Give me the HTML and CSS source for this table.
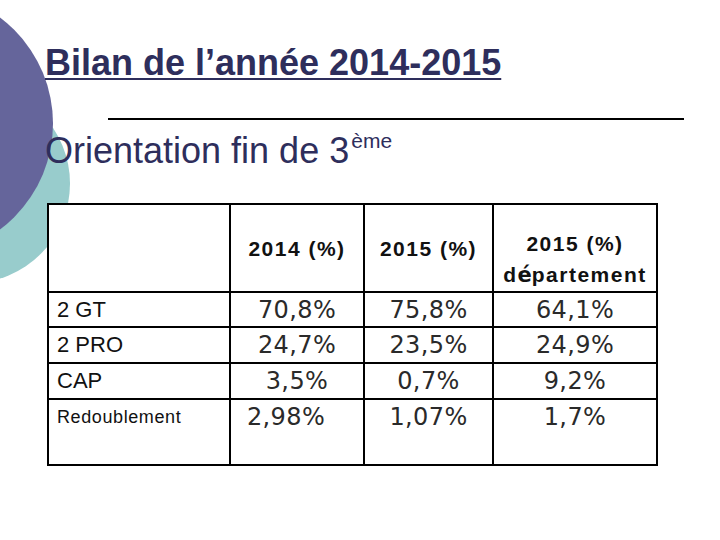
FILE: index.html
```html
<!DOCTYPE html>
<html lang="fr">
<head>
<meta charset="utf-8">
<link rel="stylesheet" href="styles.css">
</head>
<body>
<div class="slide">
  <div class="circle circle-teal"></div>
  <div class="circle circle-purple"></div>
  <h1 class="title">Bilan de l’année 2014-2015</h1>
  <div class="rule"></div>
  <h2 class="subtitle">Orientation fin de 3<sup>ème</sup></h2>
  <table class="grid">
    <colgroup>
      <col class="c1"><col class="c2"><col class="c3"><col class="c4">
    </colgroup>
    <tr class="head">
      <td></td>
      <td class="hd">2014 (%)</td>
      <td class="hd">2015 (%)</td>
      <td class="hd hd-bottom">2015 (%)<br>d<span class="eacc">é</span>partement</td>
    </tr>
    <tr class="r1">
      <td class="lab">2 GT</td><td class="val">70,8%</td><td class="val">75,8%</td><td class="val">64,1%</td>
    </tr>
    <tr class="r2">
      <td class="lab">2 PRO</td><td class="val">24,7%</td><td class="val">23,5%</td><td class="val">24,9%</td>
    </tr>
    <tr class="r3">
      <td class="lab">CAP</td><td class="val">3,5%</td><td class="val">0,7%</td><td class="val">9,2%</td>
    </tr>
    <tr class="r4">
      <td class="lab lab-small">Redoublement</td><td class="val val-off">2,98%</td><td class="val">1,07%</td><td class="val">1,7%</td>
    </tr>
  </table>
</div>
</body>
</html>
```

FILE: styles.css
```css
html, body {
  margin: 0;
  padding: 0;
  background: #ffffff;
}

.slide {
  position: relative;
  width: 720px;
  height: 540px;
  overflow: hidden;
  font-family: "Liberation Sans", Arial, sans-serif;
  display: flex;
  flex-direction: column;
}

.circle {
  position: absolute;
  border-radius: 50%;
}

.circle-purple {
  left: -212px;
  top: -9px;
  width: 265px;
  height: 265px;
  background: #65659b;
}

.circle-teal {
  left: -129px;
  top: 84px;
  width: 199px;
  height: 199px;
  background: #98cccc;
}

.title {
  position: relative;
  margin: 43px 0 0 45px;
  font-size: 36px;
  line-height: 40px;
  font-weight: bold;
  color: #2e2e5c;
  text-decoration: underline;
  text-decoration-thickness: 2px;
  text-underline-offset: 3px;
}

.rule {
  margin: 35px 0 0 108px;
  width: 576px;
  height: 2px;
  background: #000;
}

.subtitle {
  position: relative;
  margin: 11px 0 0 45px;
  font-size: 36px;
  line-height: 40px;
  font-weight: normal;
  color: #2e2e5c;
}

.subtitle sup {
  font-size: 21px;
  vertical-align: 15px;
  line-height: 0;
  margin-left: 2px;
}

.grid {
  position: relative;
  margin: 32px 0 0 47px;
  border-collapse: collapse;
  table-layout: fixed;
  width: 609px;
  border: 2px solid #000;
  background: #fff;
}

.c1 { width: 182px; }
.c2 { width: 134px; }
.c3 { width: 129px; }
.c4 { width: 164px; }

.grid td {
  border: 2px solid #000;
  padding: 0;
}

.head { height: 88px; }
.r1 { height: 35px; }
.r2 { height: 36px; }
.r3 { height: 36px; }
.r4 { height: 66px; }

.hd {
  text-align: center;
  vertical-align: middle;
  font-weight: bold;
  font-size: 21px;
  letter-spacing: 1.5px;
  color: #111;
  line-height: 31px;
  padding-top: 4px;
}

.hd-bottom {
  vertical-align: bottom;
  padding: 0 0 1px 2px;
}

.eacc {
  font-family: "DejaVu Sans", sans-serif;
  letter-spacing: 0;
}

.lab {
  font-size: 22px;
  color: #111;
  padding-left: 8px !important;
  vertical-align: middle;
  line-height: 26px;
}

.lab-small {
  font-size: 18px;
  letter-spacing: 0.6px;
  vertical-align: top;
  padding-top: 4px !important;
}

.val {
  font-family: "DejaVu Sans", Verdana, sans-serif;
  font-size: 24px;
  color: #2a2a2a;
  text-align: center;
  vertical-align: middle;
  line-height: 28px;
  letter-spacing: 0.4px;
}

.r4 .val {
  vertical-align: top;
  padding-top: 3px;
}

.val-off {
  padding-right: 22px !important;
}
```
